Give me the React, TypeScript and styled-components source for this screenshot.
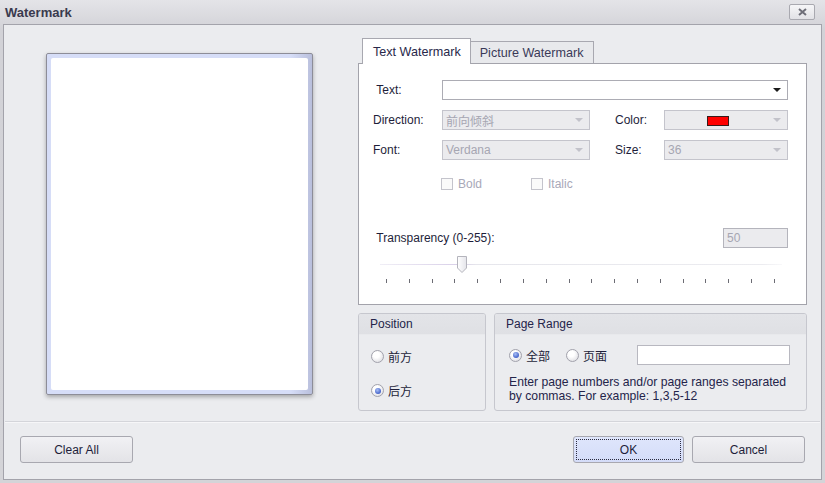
import React from 'react';
import styled, { createGlobalStyle, css } from 'styled-components';

const GlobalStyle = createGlobalStyle`
html, body {
  margin: 0;
  padding: 0;
  width: 825px;
  height: 483px;
  overflow: hidden;
}
body {
  font-family: "Liberation Sans", "Noto Sans CJK SC", sans-serif;
  font-size: 12px;
  color: #1e1e3a;
}
`

const Frame = styled.div`
width: 825px;
height: 483px;
box-sizing: border-box;
display: flex;
flex-direction: column;
background: linear-gradient(#e4e4e8, #d2d2d7 30px, #d4d4d8);
padding: 0 3px 3px 3px;
`
const TitleBar = styled.div`
height: 24px;
display: flex;
align-items: center;
justify-content: space-between;
padding: 0 7px 0 2px;
`
const Title = styled.div`
font-weight: bold;
font-size: 13px;
color: #3a3a4e;
`
const CloseButton = styled.div`
width: 24px;
height: 14px;
border: 1px solid #a9a9b0;
border-radius: 2px;
background: linear-gradient(#f6f6f8, #e2e2e6);
display: flex;
align-items: center;
justify-content: center;
`
const Body = styled.div`
flex: 1;
border: 1px solid #a3a3ab;
background: #ebecef;
display: flex;
flex-direction: column;
`
const Main = styled.div`
display: flex;
padding: 13px 0 0 42px;
`
const PreviewCol = styled.div`
width: 267px;
margin-right: 45px;
padding-top: 15px;
`
const Page = styled.div`
height: 342px;
box-sizing: border-box;
border: 1px solid #8d8d98;
border-radius: 2px;
padding: 4px;
background: linear-gradient(90deg, #d6ddf7 92%, #b9bfdc);
box-shadow: 0 2px 4px rgba(0, 0, 0, 0.3);
`
const PageInner = styled.div`
height: 100%;
background: #fff;
border-radius: 2px;
`
const RightCol = styled.div`
width: 449px;
display: flex;
flex-direction: column;
`
const TabStrip = styled.div`
display: flex;
align-items: flex-end;
height: 25px;
padding-left: 4px;
position: relative;
z-index: 1;
`
const Tab = styled.div<{ $active?: boolean }>`
box-sizing: border-box;
padding: 0 9px;
display: flex;
align-items: center;
font-size: 12.6px;
border: 1px solid #a8a8b0;
color: #28284a;
${p => p.$active ? css`
  height: 26px;
  padding: 0 9px 0 10px;
  background: #fff;
  border-bottom: none;
  margin-bottom: -1px;
` : css`
  height: 22px;
  background: #e8e9ec;
  border-left: none;
  border-bottom: none;
  color: #3a3a58;
`}
`
const TabPanel = styled.div`
height: 242px;
box-sizing: border-box;
border: 1px solid #a3a3ab;
background: #fff;
padding: 16px 18px 0 14px;
display: flex;
flex-direction: column;
`
const Row = styled.div<{ $gap?: number }>`
display: flex;
align-items: center;
height: 20px;
margin-top: ${p => p.$gap ?? 0}px;
`
const Label = styled.div<{ $w: number }>`
width: ${p => p.$w}px;
flex: none;
color: #1e1e3a;
`
const Combo = styled.div<{ $w?: number; $disabled?: boolean }>`
box-sizing: border-box;
height: 20px;
${p => p.$w ? css`width: ${p.$w}px;` : css`flex: 1;`}
border: 1px solid ${p => p.$disabled ? '#c4c4cc' : '#acacb4'};
background: ${p => p.$disabled ? '#ebebee' : '#fff'};
color: #a6a6b2;
display: flex;
align-items: center;
padding: 0 0 0 3px;
position: relative;
`
const ComboText = styled.div`
flex: 1;
`
const Arrow = styled.div<{ $disabled?: boolean }>`
width: 0;
height: 0;
border-left: 4px solid transparent;
border-right: 4px solid transparent;
border-top: 4px solid ${p => p.$disabled ? '#c2c2ca' : '#1a1a1a'};
margin-right: 6px;
`
const Swatch = styled.div`
position: absolute;
left: 42px;
top: 5px;
width: 20px;
height: 8px;
background: #ff0000;
border: 1px solid #3a1a1a;
`
const Spacer = styled.div<{ $w: number }>`
width: ${p => p.$w}px;
flex: none;
`
const CheckRow = styled.div`
display: flex;
align-items: center;
height: 12px;
margin-top: 18px;
padding-left: 68px;
`
const Check = styled.div`
display: flex;
align-items: center;
gap: 5px;
width: 90px;
color: #a8a8b8;
`
const Box = styled.div`
width: 10px;
height: 10px;
border: 1px solid #c4c4cc;
background: #fafafa;
`
const NumInput = styled.div`
box-sizing: border-box;
width: 65px;
height: 20px;
margin-left: auto;
border: 1px solid #b4b4bc;
background: #ebebee;
color: #a6a6b2;
padding-left: 3px;
display: flex;
align-items: center;
`
const Slider = styled.div`
position: relative;
margin: 5px 0 0 7px;
width: 402px;
height: 33px;
`
const Track = styled.div`
position: absolute;
left: 0;
right: 0;
top: 11px;
height: 1px;
background: linear-gradient(90deg, #f0eef6, #d8cfe8 20%, #e6e6ec 24%, #ececf0 95%, #f8f8fa);
`
const Thumb = styled.svg`
position: absolute;
top: 3px;
`
const Ticks = styled.div`
position: absolute;
left: 6px;
right: 7px;
top: 26px;
display: flex;
justify-content: space-between;
`
const Tick = styled.div`
width: 1px;
height: 4px;
background: #6c6c74;
`
const Groups = styled.div`
display: flex;
gap: 8px;
margin-top: 8px;
height: 98px;
`
const Group = styled.div<{ $w: number }>`
width: ${p => p.$w}px;
box-sizing: border-box;
border: 1px solid #c6c7ce;
border-radius: 3px;
display: flex;
flex-direction: column;
overflow: hidden;
`
const GroupHeader = styled.div`
height: 20px;
flex: none;
background: linear-gradient(#e3e4e8, #dfe0e4);
border-bottom: 1px solid #e8e9ec;
display: flex;
align-items: center;
padding-left: 11px;
color: #24244a;
`
const PositionBody = styled.div`
display: flex;
flex-direction: column;
gap: 21px;
padding: 15px 0 0 12px;
`
const RangeBody = styled.div`
display: flex;
flex-direction: column;
padding: 10px 0 0 14px;
`
const RadioRow = styled.div`
display: flex;
align-items: center;
height: 20px;
`
const Radio = styled.div`
display: flex;
align-items: center;
gap: 4px;
height: 13px;
color: #1e1e3a;
margin-right: 16px;
`
const RadioCircle = styled.div<{ $on?: boolean }>`
width: 11px;
height: 11px;
border-radius: 50%;
border: 1px solid #a2a2ac;
background: radial-gradient(circle at 40% 35%, #ffffff 30%, #d4d4da 100%);
display: flex;
align-items: center;
justify-content: center;
&::after {
  content: "";
  display: ${p => p.$on ? 'block' : 'none'};
  width: 6px;
  height: 6px;
  border-radius: 50%;
  background: radial-gradient(circle at 40% 35%, #a9c0f6, #3857c4 80%);
}
`
const PageInput = styled.div`
box-sizing: border-box;
width: 153px;
height: 20px;
margin-left: 14px;
border: 1px solid #b8b8c0;
background: #fff;
`
const Hint = styled.div`
margin-top: 10px;
line-height: 14px;
color: #24244a;
font-size: 12.2px;
`
const Separator = styled.div`
margin: 10px 1px 0;
height: 1px;
background: #d4d5da;
border-bottom: 1px solid #f6f6f8;
`
const Footer = styled.div`
display: flex;
padding: 13px 16px 0 16px;
gap: 8px;
`
const Button = styled.div<{ $primary?: boolean }>`
width: ${p => p.$primary ? 111 : 113}px;
height: 27px;
box-sizing: border-box;
border: 1px solid #a8a8b0;
border-radius: 3px;
background: ${p => p.$primary ? 'linear-gradient(#dfe6fc, #d4dcf8)' : 'linear-gradient(#f1f1f4, #e3e3e7)'};
display: flex;
align-items: center;
justify-content: center;
color: #1e1e3a;
position: relative;
${p => p.$primary && css`
  &::after {
    content: "";
    position: absolute;
    inset: 2px;
    border: 1px dotted #2a2a40;
  }
`}
`
const Grow = styled.div`
flex: 1;
`

const TICKS = Array.from({ length: 18 }, (_, i) => i)

export default function App() {
  const transparency = 50
  const thumbLeft = 6 + (transparency / 255) * 389 - 6
  return (
    <>
      <GlobalStyle />
      <Frame>
        <TitleBar>
          <Title>Watermark</Title>
          <CloseButton>
            <svg width="9" height="8" viewBox="0 0 9 8">
              <path d="M1 1 L8 7 M8 1 L1 7" stroke="#6e6e78" strokeWidth="2" />
            </svg>
          </CloseButton>
        </TitleBar>
        <Body>
          <Main>
            <PreviewCol>
              <Page><PageInner /></Page>
            </PreviewCol>
            <RightCol>
              <TabStrip>
                <Tab $active>Text Watermark</Tab>
                <Tab>Picture Watermark</Tab>
              </TabStrip>
              <TabPanel>
                <Row>
                  <Label $w={69}>&nbsp;Text:</Label>
                  <Combo>
                    <ComboText />
                    <Arrow />
                  </Combo>
                </Row>
                <Row $gap={10}>
                  <Label $w={69}>Direction:</Label>
                  <Combo $w={148} $disabled>
                    <ComboText>前向倾斜</ComboText>
                    <Arrow $disabled />
                  </Combo>
                  <Spacer $w={25} />
                  <Label $w={49}>Color:</Label>
                  <Combo $w={124} $disabled>
                    <ComboText />
                    <Swatch />
                    <Arrow $disabled />
                  </Combo>
                </Row>
                <Row $gap={10}>
                  <Label $w={69}>Font:</Label>
                  <Combo $w={148} $disabled>
                    <ComboText>Verdana</ComboText>
                    <Arrow $disabled />
                  </Combo>
                  <Spacer $w={25} />
                  <Label $w={49}>Size:</Label>
                  <Combo $w={124} $disabled>
                    <ComboText>36</ComboText>
                    <Arrow $disabled />
                  </Combo>
                </Row>
                <CheckRow>
                  <Check><Box />Bold</Check>
                  <Check><Box />Italic</Check>
                </CheckRow>
                <Row $gap={38}>
                  <Label $w={160}>&nbsp;Transparency (0-255):</Label>
                  <NumInput>50</NumInput>
                </Row>
                <Slider>
                  <Track />
                  <Thumb width="12" height="18" viewBox="0 0 12 18" style={{ left: thumbLeft }}>
                    <defs>
                      <linearGradient id="tg" x1="0" y1="0" x2="1" y2="0">
                        <stop offset="0" stopColor="#ffffff" />
                        <stop offset="1" stopColor="#e4e4ea" />
                      </linearGradient>
                    </defs>
                    <path d="M1.5 0.5 H10.5 V12 L6 16.5 L1.5 12 Z" fill="url(#tg)" stroke="#b4b4bc" />
                  </Thumb>
                  <Ticks>
                    {TICKS.map(i => <Tick key={i} />)}
                  </Ticks>
                </Slider>
              </TabPanel>
              <Groups>
                <Group $w={128}>
                  <GroupHeader>Position</GroupHeader>
                  <PositionBody>
                    <Radio><RadioCircle />前方</Radio>
                    <Radio><RadioCircle $on />后方</Radio>
                  </PositionBody>
                </Group>
                <Group $w={313}>
                  <GroupHeader>Page Range</GroupHeader>
                  <RangeBody>
                    <RadioRow>
                      <Radio><RadioCircle $on />全部</Radio>
                      <Radio><RadioCircle />页面</Radio>
                      <PageInput />
                    </RadioRow>
                    <Hint>
                      Enter page numbers and/or page ranges separated<br />
                      by commas. For example: 1,3,5-12
                    </Hint>
                  </RangeBody>
                </Group>
              </Groups>
            </RightCol>
          </Main>
          <Separator />
          <Footer>
            <Button>Clear All</Button>
            <Grow />
            <Button $primary>OK</Button>
            <Button>Cancel</Button>
          </Footer>
        </Body>
      </Frame>
    </>
  );
}
